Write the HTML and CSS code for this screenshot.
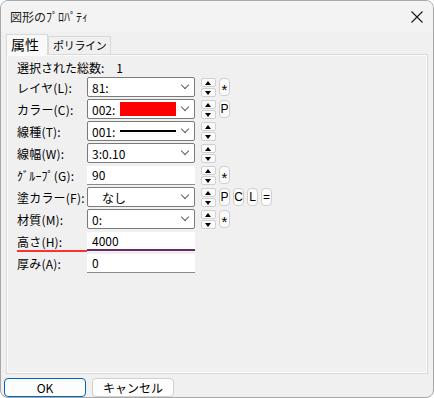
FILE: index.html
```html
<!DOCTYPE html>
<html lang="ja">
<head>
  <meta charset="UTF-8" />
  <title>図形のﾌﾟﾛﾊﾟﾃｨ</title>
  <link rel="stylesheet" href="styles.css">
</head>
<body>
  <div class="window">
    <!-- Title bar -->
    <div class="titlebar">
      <span class="title">図形のﾌﾟﾛﾊﾟﾃｨ</span>
      <svg class="close" width="12" height="12" viewBox="0 0 12 12">
        <path d="M0.5 0.5 L11.5 11.5 M11.5 0.5 L0.5 11.5" stroke="#1a1a1a" stroke-width="1.1" fill="none" />
      </svg>
    </div>

    <!-- Tabs -->
    <div class="tabs">
      <div class="tab active">属性</div>
      <div class="tab">ポリライン</div>
    </div>

    <div class="panel">
      <div class="count">選択された総数:<span class="count-num">1</span></div>

      <div class="form">
        <div class="row">
          <label>レイヤ(L):</label>
          <div class="combo"><span class="val">81:</span><span class="chev"></span></div>
          <div class="spin"><span class="up"></span><span class="down"></span></div>
          <div class="mini star">*</div>
        </div>

        <div class="row">
          <label>カラー(C):</label>
          <div class="combo"><span class="val short">002:</span><span class="swatch"></span><span class="chev"></span></div>
          <div class="spin"><span class="up"></span><span class="down"></span></div>
          <div class="mini">P</div>
        </div>

        <div class="row">
          <label>線種(T):</label>
          <div class="combo"><span class="val short">001:</span><span class="linetype"></span><span class="chev"></span></div>
          <div class="spin"><span class="up"></span><span class="down"></span></div>
        </div>

        <div class="row">
          <label>線幅(W):</label>
          <div class="combo"><span class="val">3:0.10</span><span class="chev"></span></div>
          <div class="spin"><span class="up"></span><span class="down"></span></div>
        </div>

        <div class="row">
          <label>ｸﾞﾙｰﾌﾟ(G):</label>
          <div class="edit">90</div>
          <div class="spin"><span class="up"></span><span class="down"></span></div>
          <div class="mini star">*</div>
        </div>

        <div class="row">
          <label>塗カラー(F):</label>
          <div class="combo"><span class="val indent">なし</span><span class="chev"></span></div>
          <div class="spin"><span class="up"></span><span class="down"></span></div>
          <div class="mini">P</div>
          <div class="mini">C</div>
          <div class="mini">L</div>
          <div class="mini">=</div>
        </div>

        <div class="row">
          <label>材質(M):</label>
          <div class="combo"><span class="val">0:</span><span class="chev"></span></div>
          <div class="spin"><span class="up"></span><span class="down"></span></div>
          <div class="mini star">*</div>
        </div>

        <div class="row marked">
          <label>高さ(H):</label>
          <div class="edit focus">4000</div>
        </div>

        <div class="row">
          <label>厚み(A):</label>
          <div class="edit">0</div>
        </div>
      </div>
    </div>

    <!-- Buttons -->
    <div class="buttons">
      <button class="btn default">OK</button>
      <button class="btn">キャンセル</button>
    </div>
  </div>
</body>
</html>
```

FILE: styles.css
```css
/* Basic reset */
* {
  margin: 0;
  padding: 0;
  box-sizing: border-box;
}

body {
  width: 434px;
  height: 398px;
  background: #ffffff;
  font-family: 'Noto Sans CJK JP', 'Noto Sans', sans-serif;
  font-size: 12px;
  color: #000;
  overflow: hidden;
}

.window {
  width: 434px;
  height: 398px;
  background: #f0f0f0;
  border: 1px solid #a8a8a8;
  border-radius: 8px;
  display: flex;
  flex-direction: column;
  overflow: hidden;
}

/* Title bar */
.titlebar {
  height: 31px;
  display: flex;
  align-items: center;
  justify-content: space-between;
  padding: 0 10px 0 9px;
  background: #f3f3f3;
}

.title {
  font-size: 12px;
  color: #1a1a1a;
}

/* Tabs */
.tabs {
  display: flex;
  align-items: flex-end;
  height: 22px;
  padding-left: 5px;
  position: relative;
  z-index: 1;
}

.tab {
  height: 18px;
  padding: 0 3px 0 4px;
  border: 1px solid #d9d9d9;
  border-bottom: none;
  line-height: 17px;
  font-size: 11px;
  letter-spacing: -0.3px;
  background: #f0f0f0;
}

.tab.active {
  height: 21px;
  width: 42px;
  padding: 0 4px;
  font-size: 14px;
  letter-spacing: 0;
  line-height: 19px;
  background: #f9f9f9;
  margin-bottom: -1px;
}

/* Tab panel */
.panel {
  margin: 0 5px;
  height: 320px;
  border: 1px solid #d9d9d9;
  box-shadow: inset 1px 1px 0 #fbfbfb, inset -1px -1px 0 #fbfbfb;
  background: #f0f0f0;
  padding: 5px 0 0 10px;
}

.count {
  height: 16px;
  line-height: 16px;
}

.count-num {
  margin-left: 12px;
}

.form {
  display: flex;
  flex-direction: column;
  gap: 2px;
  margin-top: 1px;
}

.row {
  display: flex;
  align-items: center;
  height: 20px;
  position: relative;
}

.row label {
  width: 70px;
  white-space: nowrap;
  letter-spacing: 0.2px;
}

/* Combo box */
.combo {
  width: 108px;
  height: 20px;
  background: #fff;
  border: 1px solid #7a7a7a;
  border-radius: 2px;
  display: flex;
  align-items: center;
  padding-left: 4px;
  position: relative;
}

.val {
  flex: 1;
}

.val.short {
  flex: 0 0 28px;
}

.val.indent {
  padding-left: 10px;
}

.swatch {
  width: 56px;
  height: 14px;
  background: #ff0000;
  margin-right: 18px;
}

.linetype {
  width: 56px;
  height: 2px;
  background: #000;
  margin-right: 18px;
}

.chev {
  position: absolute;
  right: 6px;
  top: 4px;
  width: 6px;
  height: 6px;
  border-right: 1px solid #606060;
  border-bottom: 1px solid #606060;
  transform: rotate(45deg);
}

/* Edit box */
.edit {
  width: 108px;
  height: 19px;
  background: #fff;
  border-bottom: 1px solid #8a8a8a;
  padding-left: 5px;
  line-height: 18px;
}

.edit.focus {
  border-bottom: 2px solid #6a2a6a;
}

.marked::after {
  content: '';
  position: absolute;
  left: 0;
  bottom: -1px;
  width: 70px;
  height: 2px;
  background: #ff3030;
}

/* Spinner */
.spin {
  width: 15px;
  height: 19px;
  margin-left: 6px;
  display: flex;
  flex-direction: column;
  gap: 1px;
}

.spin span {
  flex: 1;
  border: 1px solid #d0d0d0;
  border-radius: 2px;
  background: #fbfbfb;
  position: relative;
}

.spin span::after {
  content: '';
  position: absolute;
  left: 3px;
  width: 0;
  height: 0;
  border-left: 3.5px solid transparent;
  border-right: 3.5px solid transparent;
}

.spin .up::after {
  top: 2px;
  border-bottom: 4px solid #000;
}

.spin .down::after {
  top: 2px;
  border-top: 4px solid #000;
}

/* Small buttons */
.mini {
  width: 11px;
  height: 18px;
  margin-left: 3px;
  border: 1px solid #cfcfcf;
  border-radius: 4px;
  background: #fbfbfb;
  text-align: center;
  line-height: 16px;
  font-family: 'Liberation Sans', sans-serif;
  font-size: 12px;
}

.mini.star {
  font-size: 15px;
  line-height: 16px;
  padding-top: 3px;
}

/* Bottom buttons */
.buttons {
  display: flex;
  gap: 6px;
  padding: 4px 0 0 3px;
}

.btn {
  width: 82px;
  height: 19px;
  font-family: 'Noto Sans CJK JP', 'Noto Sans', sans-serif;
  font-size: 12px;
  background: #fdfdfd;
  border: 1px solid #d0d0d0;
  border-radius: 4px;
  line-height: 16px;
}

.btn.default {
  border-color: #0067c0;
}
```
